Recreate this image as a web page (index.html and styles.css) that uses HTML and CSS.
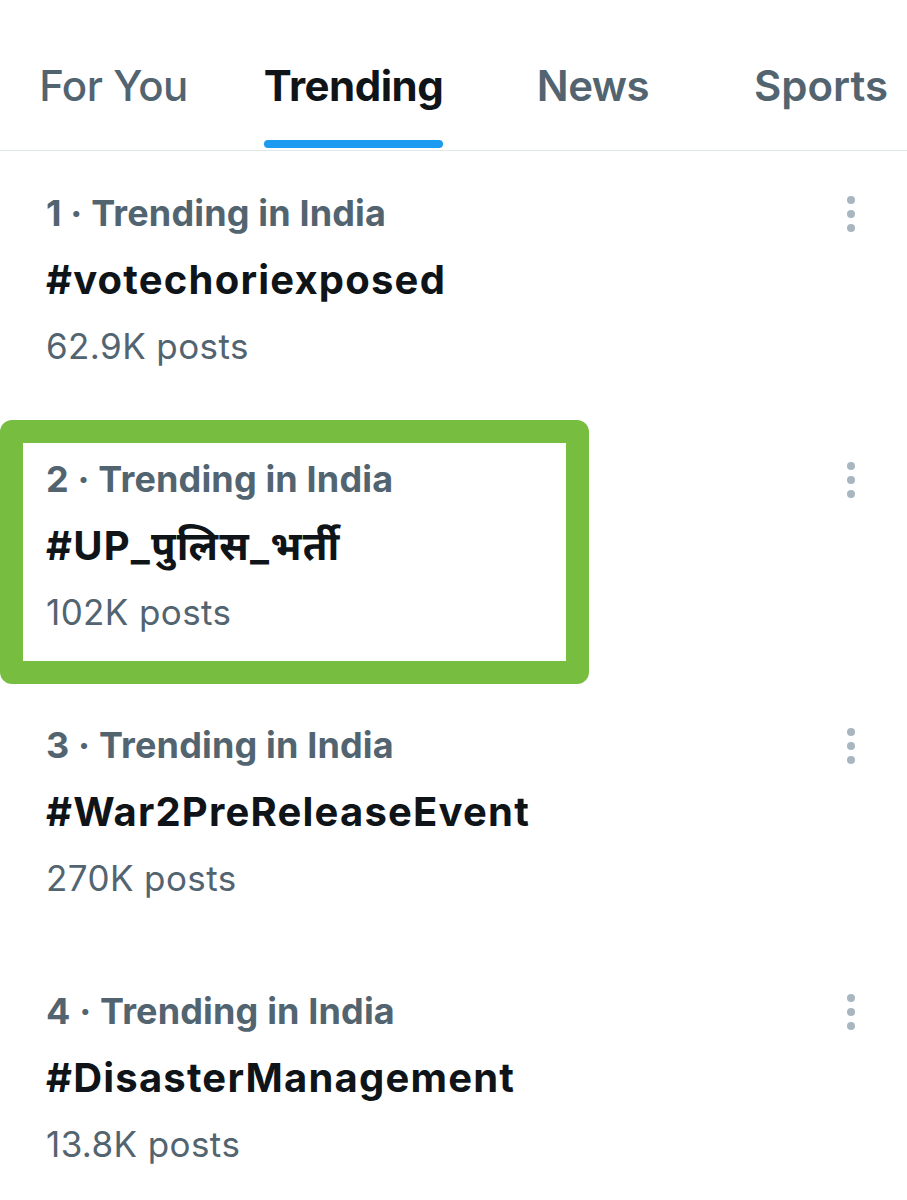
FILE: index.html
```html
<!DOCTYPE html>
<html lang="en">
<head>
<meta charset="utf-8">
<title>Trending</title>
<link rel="stylesheet" href="styles.css">
</head>
<body>
<div class="page">
  <nav class="tabs">
    <div class="tab tab-foryou"><div class="tab-inner"><span class="tab-label">For You</span><span class="tab-bar"></span></div></div>
    <div class="tab tab-trending active"><div class="tab-inner"><span class="tab-label">Trending</span><span class="tab-bar"></span></div></div>
    <div class="tab tab-news"><div class="tab-inner"><span class="tab-label">News</span><span class="tab-bar"></span></div></div>
    <div class="tab tab-sports"><div class="tab-inner"><span class="tab-label">Sports</span><span class="tab-bar"></span></div></div>
  </nav>
  <ul class="trends">
    <li class="trend">
      <div class="trend-text">
        <div class="trend-meta">1 · Trending in India</div>
        <div class="trend-name">#votechoriexposed</div>
        <div class="trend-count">62.9K posts</div>
      </div>
      <div class="more"><span></span><span></span><span></span></div>
    </li>
    <li class="trend trend-highlight">
      <div class="highlight-box"></div>
      <div class="trend-text">
        <div class="trend-meta">2 · Trending in India</div>
        <div class="trend-name">#UP_पुलिस_भर्ती</div>
        <div class="trend-count">102K posts</div>
      </div>
      <div class="more"><span></span><span></span><span></span></div>
    </li>
    <li class="trend">
      <div class="trend-text">
        <div class="trend-meta">3 · Trending in India</div>
        <div class="trend-name">#War2PreReleaseEvent</div>
        <div class="trend-count">270K posts</div>
      </div>
      <div class="more"><span></span><span></span><span></span></div>
    </li>
    <li class="trend">
      <div class="trend-text">
        <div class="trend-meta">4 · Trending in India</div>
        <div class="trend-name">#DisasterManagement</div>
        <div class="trend-count">13.8K posts</div>
      </div>
      <div class="more"><span></span><span></span><span></span></div>
    </li>
  </ul>
</div>
</body>
</html>
```
FILE: styles.css
```css
* { box-sizing: border-box; }
html, body { margin: 0; padding: 0; background: #ffffff; }
body {
  font-family: Inter, "Noto Sans Devanagari", "Noto Sans", "DejaVu Sans", sans-serif;
  color: #0f1419;
  width: 907px;
  overflow: hidden;
}
.page { width: 907px; }

.tabs {
  display: flex;
  height: 151px;
  border-bottom: 1px solid #e3e8eb;
}
.tab {
  display: flex;
  justify-content: center;
  flex: none;
}
.tab-foryou { width: 227px; }
.tab-trending { width: 253px; }
.tab-news { width: 226px; }
.tab-sports { width: 230px; }
.tab-inner {
  display: flex;
  flex-direction: column;
  justify-content: flex-end;
}
.tab-label {
  font-size: 42px;
  line-height: 44px;
  font-weight: 600;
  color: #536471;
  white-space: nowrap;
  letter-spacing: -0.5px;
}
.tab-foryou .tab-label { font-weight: 500; }
.tab-sports .tab-label { letter-spacing: 0; }
.tab-bar {
  display: block;
  height: 8px;
  margin-top: 32px;
  margin-bottom: 2px;
  border-radius: 4px;
  background: transparent;
}
.tab.active .tab-label { color: #0f1419; font-weight: 700; }
.tab.active .tab-bar { background: #1d9bf0; }

.trends { list-style: none; margin: 0; padding: 0; }
.trend {
  position: relative;
  display: flex;
  justify-content: space-between;
  height: 266px;
  padding: 29px 0 0 46px;
}
.trend-meta {
  font-size: 36px;
  line-height: 66px;
  font-weight: 700;
  color: #536471;
  letter-spacing: 0.15px;
}
.trend-name {
  font-size: 40px;
  line-height: 68px;
  font-weight: 700;
  color: #0f1419;
  letter-spacing: 1.2px;
}
.trend-count {
  font-size: 35px;
  line-height: 64px;
  font-weight: 400;
  color: #536471;
  letter-spacing: 0.4px;
}
.more {
  display: flex;
  flex-direction: column;
  gap: 6px;
  width: 8px;
  margin: 16px 52px 0 0;
}
.more span {
  display: block;
  width: 8px;
  height: 8px;
  border-radius: 50%;
  background: #a9b6c0;
}
.trend-text { position: relative; z-index: 1; }
.highlight-box {
  position: absolute;
  left: 0;
  top: 3px;
  width: 589px;
  height: 264px;
  border: 23px solid #77bd3f;
  border-radius: 12px;
}
```
